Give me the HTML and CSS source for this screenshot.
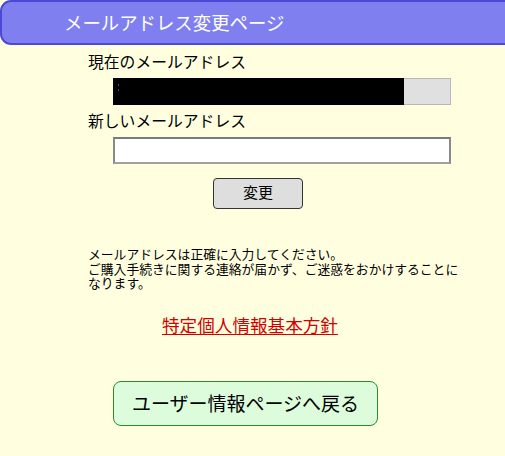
FILE: index.html
```html
<!DOCTYPE html>
<html lang="ja">
<head>
<meta charset="utf-8">
<title>メールアドレス変更ページ</title>
<link rel="stylesheet" href="styles.css">
</head>
<body>
<div class="header">メールアドレス変更ページ</div>
<div class="main">
  <div class="label first">現在のメールアドレス</div>
  <div class="field current"><span class="redact"><span class="dot"></span></span></div>
  <div class="label second">新しいメールアドレス</div>
  <div class="field new"></div>
  <button class="change">変更</button>
  <p class="note">メールアドレスは正確に入力してください。<br>ご購入手続きに関する連絡が届かず、ご迷惑をおかけすることになります。</p>
</div>
<div class="linkrow"><a class="policy" href="#">特定個人情報基本方針</a></div>
<div class="backrow"><button class="back">ユーザー情報ページへ戻る</button></div>
</body>
</html>
```
FILE: styles.css
```css
html, body {
  margin: 0;
  padding: 0;
  background: #ffffe0;
  font-family: "Noto Sans CJK JP", "Liberation Sans", sans-serif;
  color: #000;
  overflow: hidden;
}
.header {
  box-sizing: border-box;
  height: 45px;
  width: 530px;
  background: #7f7fef;
  border: 2px solid #4a4ad6;
  border-radius: 11px 0 0 11px;
  color: #fff;
  font-size: 18.4px;
  line-height: 40px;
  padding-left: 62px;
  letter-spacing: 0;
}
.main {
  padding-left: 88px;
}
.label {
  font-size: 15.8px;
  line-height: 20px;
  height: 20px;
}
.label.first { margin-top: 7px; }
.label.second { margin-top: 6px; }
.field {
  box-sizing: border-box;
  position: relative;
  margin-left: 25px;
  width: 338px;
  height: 27px;
}
.field.current {
  margin-top: 6px;
  background: #e0e0e0;
  border: 1px solid #b8b8b8;
}
.redact {
  position: absolute;
  left: -1px;
  top: -1px;
  width: 291px;
  height: 27px;
  background: #000;
}
.dot {
  position: absolute;
  left: 5px;
  top: 6px;
  width: 1px;
  height: 12px;
  background: linear-gradient(#555 0 2px, transparent 2px 5px, #444 5px 7px, transparent 7px);
}
.field.new {
  margin-top: 6px;
  background: #fff;
  border: 2px solid #8a8a8a;
  border-top-color: #7a7a7a;
  border-bottom-color: #a0a0a0;
}
.change {
  display: block;
  box-sizing: border-box;
  margin: 14px 0 0 125px;
  width: 90px;
  height: 31px;
  background: #dedede;
  border: 1px solid #333;
  border-radius: 4px;
  font-family: inherit;
  font-size: 15px;
  line-height: 20px;
  padding: 0 0 3px;
  color: #000;
}
.note {
  margin: 38px 0 0;
  width: 376px;
  font-size: 12.8px;
  line-height: 14.5px;
}
.linkrow {
  width: 500px;
  text-align: center;
  margin-top: 23px;
  line-height: 22px;
}
.policy {
  font-size: 17.6px;
  color: #d20000;
  text-decoration: underline;
  text-underline-offset: 2px;
}
.backrow {
  padding-left: 113px;
  margin-top: 45px;
}
.back {
  box-sizing: border-box;
  width: 265px;
  height: 45px;
  background: #dcfcdc;
  border: 1px solid #2b8a2b;
  border-radius: 8px;
  font-family: inherit;
  font-size: 19px;
  color: #000;
  padding: 0 0 2px;
}
```
